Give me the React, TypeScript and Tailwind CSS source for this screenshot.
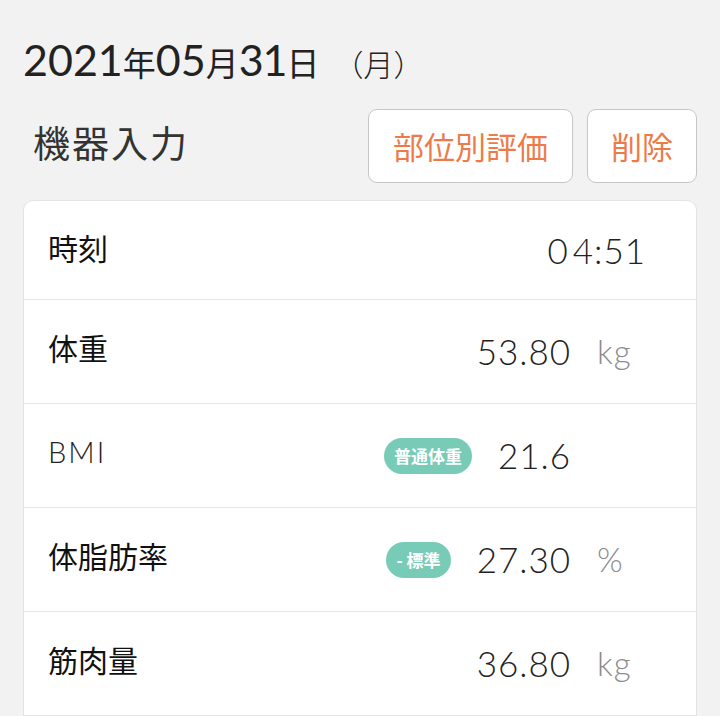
import React from "react";

const jp = "font-['Noto_Sans_CJK_JP',sans-serif]";
const num = "font-['Lato','Noto_Sans_CJK_JP',sans-serif]";

type Row = {
  label: string;
  value: string;
  unit?: string;
  badge?: string;
  latinLabel?: boolean;
};

const rows: Row[] = [
  { label: "体重", value: "53.80", unit: "kg" },
  { label: "BMI", value: "21.6", unit: "", badge: "普通体重", latinLabel: true },
  { label: "体脂肪率", value: "27.30", unit: "%", badge: "- 標準" },
  { label: "筋肉量", value: "36.80", unit: "kg" },
];

export default function App() {
  return (
    <div className="w-[720px] h-[716px] overflow-hidden bg-[#f2f2f2] px-[23px] pt-[38px]">
      {/* date */}
      <div className="flex items-baseline text-[#222]">
        <span className={`${num} text-[43px] leading-none font-normal`}>2021</span>
        <span className={`${jp} text-[33px] leading-none`}>年</span>
        <span className={`${num} text-[43px] leading-none font-normal`}>05</span>
        <span className={`${jp} text-[33px] leading-none`}>月</span>
        <span className={`${num} text-[43px] leading-none font-normal tracking-[-1px]`}>31</span>
        <span className={`${jp} text-[33px] leading-none`}>日</span>
        <span className={`${jp} text-[30px] leading-none ml-[14px] font-light`}>（月）</span>
      </div>

      {/* title + buttons */}
      <div className="flex items-center mt-[28px]">
        <h1 className={`${jp} pl-[10px] pb-[6px] text-[37px] tracking-[2px] text-[#333] font-normal flex-1`}>
          機器入力
        </h1>
        <button className={`${jp} h-[74px] w-[205px] rounded-[9px] border border-[#c6c6c6] bg-white text-[31px] text-[#ec7b49]`}>
          部位別評価
        </button>
        <button className={`${jp} ml-[14px] h-[74px] w-[110px] rounded-[9px] border border-[#c6c6c6] bg-white text-[31px] text-[#ec7b49]`}>
          削除
        </button>
      </div>

      {/* card */}
      <div className="mt-[17px] bg-white border border-[#e4e4e4] rounded-t-[10px]">
        <div className="flex items-center h-[99px] border-b border-[#e6e6e6] pl-[24px] pr-[50px]">
          <span className={`${jp} flex-1 text-[30px] text-[#111] pb-[6px]`}>時刻</span>
          <span className={`${num} text-[35px] font-light tracking-[1px] text-[#222]`}>
            0<span className="ml-[4px]">4:51</span>
          </span>
        </div>
        {rows.map((r) => (
          <div
            key={r.label}
            className="flex items-center h-[104px] border-b border-[#e6e6e6] pl-[24px] pr-[50px]"
          >
            {r.latinLabel ? (
              <span className={`${num} flex-1 text-[29px] font-light tracking-[2px] text-[#222] pb-[8px]`}>
                {r.label}
              </span>
            ) : (
              <span className={`${jp} flex-1 text-[30px] text-[#111] pb-[8px]`}>{r.label}</span>
            )}
            {r.badge && (
              <span
                className={`${jp} mr-[26px] h-[36px] px-[10px] rounded-full bg-[#78cbb7] text-white text-[17px] font-bold flex items-center whitespace-pre`}
              >
                {r.badge}
              </span>
            )}
            <span className={`${num} text-[35px] font-light tracking-[1px] text-[#222]`}>{r.value}</span>
            <span className={`${num} w-[75px] pl-[26px] text-[33px] font-light tracking-[1px] text-[#8a8a8a]`}>
              {r.unit}
            </span>
          </div>
        ))}
      </div>
    </div>
  );
}
